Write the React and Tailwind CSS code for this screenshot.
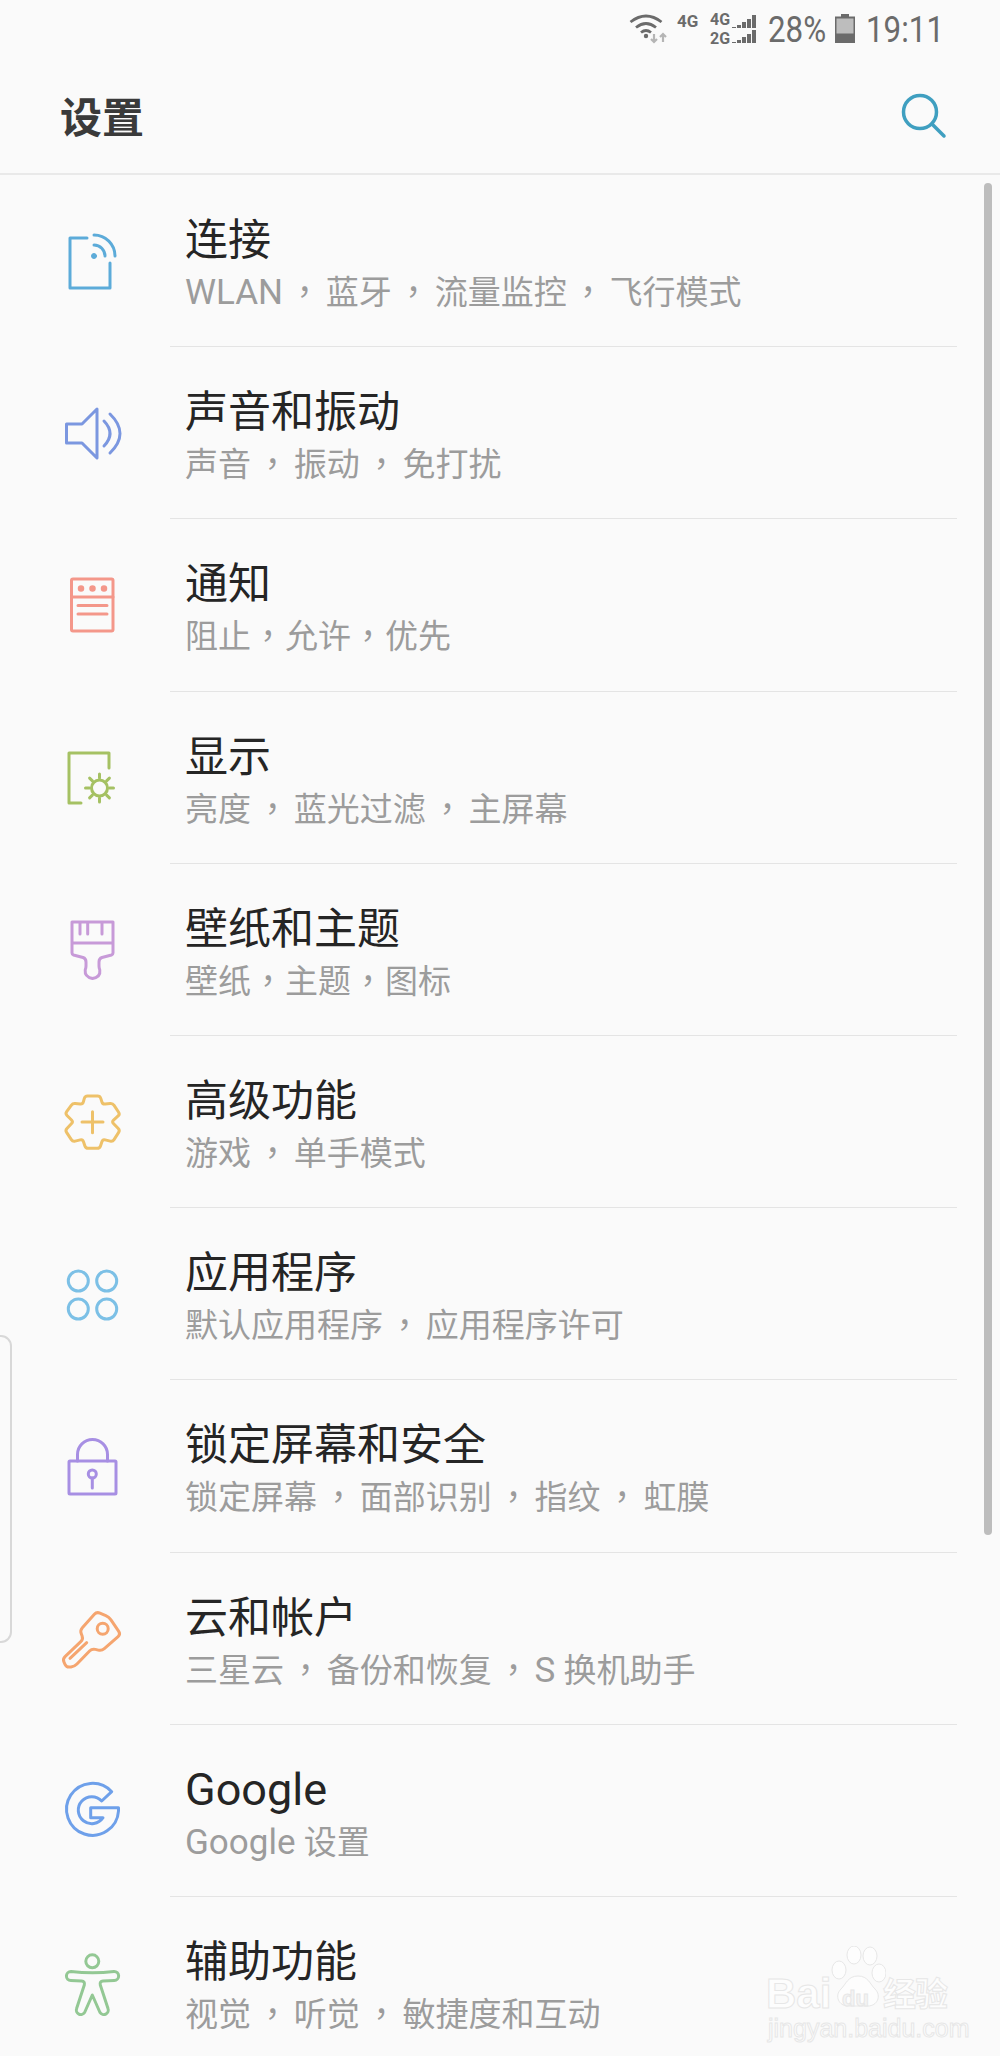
import React from "react";

// turns a list of corners into a path with softened corners
function rounded(points, r) {
  const n = points.length;
  let d = "";
  points.forEach((p, i) => {
    const prev = points[(i + n - 1) % n];
    const next = points[(i + 1) % n];
    const toward = (a, b) => {
      const len = Math.hypot(b[0] - a[0], b[1] - a[1]);
      const t = Math.min(r, len / 2) / len;
      return [a[0] + (b[0] - a[0]) * t, a[1] + (b[1] - a[1]) * t];
    };
    const a = toward(p, prev);
    const b = toward(p, next);
    d += `${i === 0 ? "M" : "L"}${a[0]} ${a[1]}Q${p[0]} ${p[1]} ${b[0]} ${b[1]}`;
  });
  return d + "Z";
}

const gear = rounded(
  [
    [28, 9], [43, 9], [45.7, 17.3], [55.7, 16.3], [63, 27.3], [54.7, 34.7],
    [63, 43.3], [55.7, 54.7], [45.7, 52.3], [42.7, 61.3], [28.7, 61.3], [25.7, 52.3],
    [15.7, 54.7], [8.2, 43.3], [16.3, 34.7], [8.2, 26.7], [15.7, 16.3], [25.7, 17.3],
  ],
  2.5
);

const key = rounded(
  [
    [39.7, 7.7], [52, 13], [63.7, 30.3], [44.7, 47], [35, 44.5], [17.5, 62.5],
    [9.5, 63.5], [5.5, 55], [26.3, 35.3], [23, 26.3],
  ],
  3.5
);

function Icon({ color, children }) {
  return (
    <svg
      width="70"
      height="70"
      viewBox="0 0 70 70"
      fill="none"
      stroke={color}
      strokeWidth="3"
      strokeLinecap="round"
      strokeLinejoin="round"
    >
      {children}
    </svg>
  );
}

const rows = [
  {
    title: "连接",
    sub: "WLAN ， 蓝牙 ， 流量监控 ， 飞行模式",
    icon: (
      <Icon color="#5cabd9">
        <path d="M30 12H13v50h40V37" />
        <circle cx="37" cy="30" r="2.5" fill="#5cabd9" strokeWidth="1" />
        <path d="M37 19a11 11 0 0 1 11 11" />
        <path d="M37 9a21 21 0 0 1 21 21" />
      </Icon>
    ),
  },
  {
    title: "声音和振动",
    sub: "声音 ， 振动 ， 免打扰",
    icon: (
      <Icon color="#7b97e0">
        <path d="M40 11L25 26H9.500v19H25l15 15z" />
        <path d="M47 23q12 12.500 0 25" />
        <path d="M53 16q20 19.500 0 39" />
      </Icon>
    ),
  },
  {
    title: "通知",
    sub: "阻止，允许，优先",
    icon: (
      <Icon color="#f4978a">
        <rect x="14.500" y="9" width="41.500" height="52" rx="1.500" />
        <path d="M14.500 27H56M21 35.500h29M21 44h29" />
        <circle cx="24" cy="18.500" r="2.500" fill="#f4978a" strokeWidth="1.500" />
        <circle cx="35.500" cy="18.500" r="2.500" fill="#f4978a" strokeWidth="1.500" />
        <circle cx="47" cy="18.500" r="2.500" fill="#f4978a" strokeWidth="1.500" />
      </Icon>
    ),
  },
  {
    title: "显示",
    sub: "亮度 ， 蓝光过滤 ， 主屏幕",
    icon: (
      <Icon color="#a5c163">
        <path d="M24 60H12V10h40v15" />
        <circle cx="42.500" cy="45" r="8" />
        <path d="M42.500 31v4M42.500 55v4M28.500 45h4M52.500 45h4M32.600 35.100l2.800 2.800M49.600 52.100l2.800 2.800M32.600 54.900l2.800-2.800M49.600 37.900l2.800-2.800" />
      </Icon>
    ),
  },
  {
    title: "壁纸和主题",
    sub: "壁纸，主题，图标",
    icon: (
      <Icon color="#c79ad8">
        <path d="M15 7h41v31q0 1.500-1.500 2L45 42.500q-3 1-3 4.500v4q0 2 .8 4 1 7-7.300 8.500Q27.500 62 28.200 55q.8-2 .8-4v-4q0-3.500-3-4.500L16.500 40Q15 39.500 15 38zM15 28h41M23 7v12M30.700 7v12M45 7v12" />
      </Icon>
    ),
  },
  {
    title: "高级功能",
    sub: "游戏 ， 单手模式",
    icon: (
      <Icon color="#eec169">
        <path d={gear} />
        <path d="M25 35h21M35.500 24.700v21" />
      </Icon>
    ),
  },
  {
    title: "应用程序",
    sub: "默认应用程序 ， 应用程序许可",
    icon: (
      <Icon color="#7cc0e6">
        <circle cx="21.300" cy="22" r="10" />
        <circle cx="49.700" cy="22" r="10" />
        <circle cx="21.300" cy="50" r="10" />
        <circle cx="49.700" cy="50" r="10" />
      </Icon>
    ),
  },
  {
    title: "锁定屏幕和安全",
    sub: "锁定屏幕 ， 面部识别 ， 指纹 ， 虹膜",
    icon: (
      <Icon color="#a78fe3">
        <rect x="12" y="30" width="47" height="33" rx="1" />
        <path d="M20.500 30v-6.500a15 15 0 0 1 30 0V30" />
        <circle cx="35.300" cy="43" r="4" />
        <path d="M35.300 47v10" />
      </Icon>
    ),
  },
  {
    title: "云和帐户",
    sub: "三星云 ， 备份和恢复 ， S 换机助手",
    icon: (
      <Icon color="#f5a56f">
        <path d={key} />
        <circle cx="45.700" cy="24.700" r="5.500" />
        <path d="M13 54.300l16.700-15.600" />
      </Icon>
    ),
  },
  {
    title: "Google",
    sub: "Google 设置",
    icon: (
      <Icon color="#6ea0ea">
        <path d="M54.700 15.700A26 26 0 1 0 61.500 35v-3.300H33.700v10H46A13.500 13.500 0 1 1 44.700 25z" />
      </Icon>
    ),
  },
  {
    title: "辅助功能",
    sub: "视觉 ， 听觉 ， 敏捷度和互动",
    icon: (
      <Icon color="#93c894">
        <circle cx="35.300" cy="13.300" r="6.500" />
        <path d="M14 23.500q21.500 2.500 43 0a4.500 4.500 0 0 1 .3 9L46 33q-3.500.3-2.700 4L51 60.500a4.500 4.500 0 0 1-8 4L35.300 47l-7.700 17.500a4.500 4.500 0 0 1-8-4L27.300 37q.8-3.700-2.700-4l-10.800-.5a4.500 4.500 0 0 1 .2-9z" />
      </Icon>
    ),
  },
];

// latin runs sit larger than the CJK around them, commas are centred in their box
function Sub({ text }) {
  return text.split(/( ， |，|[A-Za-z]+)/).map((part, i) => {
    if (part === " ， ") {
      return (
        <span key={i} className="mx-[-2.5px] leading-none font-['Noto_Sans_CJK_TC',sans-serif]">
          {part}
        </span>
      );
    }
    if (part === "，") {
      return (
        <span key={i} className="mx-[0.5px] leading-none font-['Noto_Sans_CJK_TC',sans-serif]">
          {part}
        </span>
      );
    }
    if (/^[A-Za-z]+$/.test(part)) {
      return (
        <span key={i} className="text-[35px] leading-none">
          {part}
        </span>
      );
    }
    return part;
  });
}

function SignalBars() {
  return (
    <svg width="25" height="13" viewBox="0 0 25 13" fill="#6b6b6b">
      <path d="M0 12h4v1H0zM5 10h4v3H5zM10 7h4v6h-4zM15 4h4v9h-4zM20 0h4v13h-4z" />
    </svg>
  );
}

function StatusBar() {
  return (
    <div className="h-[60px] flex items-start justify-end pr-[58px] text-[#6b6b6b] font-['Roboto',sans-serif]">
      <svg width="39" height="32" viewBox="0 0 39 32" className="mt-[13px] mr-[9px]" fill="none">
        <path d="M1.500 9q15.500-12 31 0M7 14.500q10-8 20 0M12 19.500q5-4 10 0" stroke="#6b6b6b" strokeWidth="2.800" />
        <circle cx="17" cy="23" r="2.200" fill="#6b6b6b" />
        <path d="M25 21v8M22 26l3 3 3-3" stroke="#b5b5b5" strokeWidth="2.200" />
        <path d="M34 29v-8M31 24l3-3 3 3" stroke="#b5b5b5" strokeWidth="2.200" />
      </svg>
      <span className="w-[33px] mt-[12px] text-[17px] leading-[18px] font-bold">4G</span>
      <div className="w-[22px] mt-[10px] flex flex-col text-[16px] leading-[19px] font-bold">
        <span>4G</span>
        <span>2G</span>
      </div>
      <div className="mt-[15px] mr-[11px] flex flex-col gap-[2px]">
        <SignalBars />
        <SignalBars />
      </div>
      <span className="w-[58px] mt-[8px] text-[36px] leading-[44px] scale-x-[0.87] origin-left whitespace-nowrap">28%</span>
      <svg width="20" height="30" viewBox="0 0 20 30" className="mt-[14px] ml-[9px] mr-[11px]">
        <path d="M6 0h8v2.500h6V29H0V2.500h6z" fill="#6b6b6b" />
        <rect x="1.500" y="4.500" width="17" height="15" fill="#bdbdbd" />
      </svg>
      <span className="w-[76px] mt-[8px] text-[36px] leading-[44px] scale-x-[0.87] origin-left whitespace-nowrap">19:11</span>
    </div>
  );
}

function Header() {
  return (
    <div className="h-[115px] flex items-center justify-between pl-[60px] pr-[51px] border-b-2 border-[#e9e9e9]">
      <h1 className="mt-[4px] text-[42px] leading-[56px] font-bold text-[#3a3a3a]">设置</h1>
      <svg width="50" height="50" viewBox="0 0 50 50" fill="none" stroke="#3f9fc0" strokeWidth="3.500" className="mt-[-2px]">
        <circle cx="21" cy="21" r="16.500" />
        <path d="M33 33l12 12" strokeLinecap="round" />
      </svg>
    </div>
  );
}

function Row({ title, sub, icon, last }) {
  return (
    <div className="h-[172.2px] flex">
      <div className="w-[170px] pl-[57px] flex items-center shrink-0">{icon}</div>
      <div className={`flex-1 mr-[43px] pl-[15px] pt-[40px] ${last ? "" : "border-b border-[#e4e4e4]"}`}>
        <div className={`${title === "Google" ? "text-[45px]" : "text-[43px]"} leading-[50px] text-[#252525]`}>{title}</div>
        <div className="mt-[8px] text-[33px] leading-[40px] text-[#9c9c9c] whitespace-nowrap">
          <Sub text={sub} />
        </div>
      </div>
    </div>
  );
}

function Watermark() {
  return (
    <div className="absolute left-[766px] top-[1946px] w-[184px] h-[92px] text-[#fdfdfd] font-['Liberation_Sans',sans-serif] [-webkit-text-stroke:1px_#e7e7e7]">
      <div className="absolute left-0 top-[28px] text-[42px] leading-[40px] font-bold">Bai</div>
      <svg width="56" height="62" viewBox="0 0 56 62" className="absolute left-[64px] top-0" fill="#fdfdfd" stroke="#e7e7e7" strokeWidth="1">
        <ellipse cx="9" cy="24" rx="7" ry="9" />
        <ellipse cx="24" cy="9" rx="7" ry="9" />
        <ellipse cx="40" cy="10" rx="7" ry="9" />
        <ellipse cx="49" cy="27" rx="7" ry="9" />
        <path d="M28 30c10 0 12 8 17 13 7 7 2 17-7 17H18C9 60 4 50 11 43c5-5 7-13 17-13z" />
      </svg>
      <div className="absolute left-[76px] top-[40px] text-[22px] leading-[26px] font-bold text-[#f4f4f4]">du</div>
      <div className="absolute left-[117px] top-[26px] text-[33px] leading-[40px] font-bold tracking-[-1px] font-['Noto_Sans_CJK_SC',sans-serif]">经验</div>
      <div className="absolute left-[2px] top-[68px] text-[25px] leading-[28px] whitespace-nowrap">jingyan.baidu.com</div>
    </div>
  );
}

export default function App() {
  return (
    <div className="relative w-[1000px] h-[2056px] overflow-hidden bg-[#fafafa] font-['Roboto','Noto_Sans_CJK_SC',sans-serif]">
      <StatusBar />
      <Header />
      {rows.map((row, i) => (
        <Row key={row.title} {...row} last={i === rows.length - 1} />
      ))}
      {/* scrollbar, edge panel handle and watermark lie over the list */}
      <div className="absolute left-[984px] top-[183px] w-[8px] h-[1352px] rounded-full bg-[#bdbdbd]" />
      <div className="absolute left-[-10px] top-[1335px] w-[22px] h-[308px] rounded-[12px] border-2 border-[#d8d8d8]" />
      <Watermark />
    </div>
  );
}
